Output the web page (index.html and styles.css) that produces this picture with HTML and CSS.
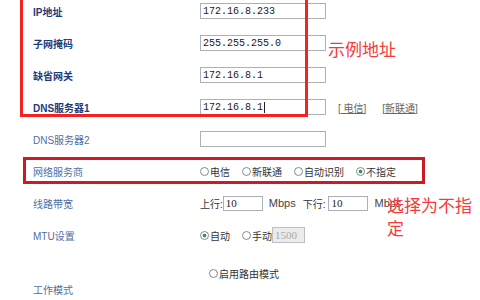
FILE: index.html
```html
<!DOCTYPE html>
<html lang="zh-CN">
<head>
  <meta charset="UTF-8">
  <title>WAN设置</title>
  <link rel="stylesheet" href="styles.css">
</head>
<body>
  <div class="page">
    <div class="form">
      <div class="row">
        <span class="label strong">IP地址</span>
        <input class="field" type="text" value="172.16.8.233">
      </div>
      <div class="row">
        <span class="label strong">子网掩码</span>
        <input class="field" type="text" value="255.255.255.0">
      </div>
      <div class="row">
        <span class="label strong">缺省网关</span>
        <input class="field" type="text" value="172.16.8.1">
      </div>
      <div class="row">
        <span class="label strong">DNS服务器1</span>
        <div class="field fake">172.16.8.1<span class="caret"></span></div>
        <a class="dns-link" href="#">[ 电信]</a>
        <a class="dns-link" href="#">[新联通]</a>
      </div>
      <div class="row">
        <span class="label">DNS服务器2</span>
        <input class="field" type="text" value="">
      </div>
      <div class="row">
        <span class="label">网络服务商</span>
        <label class="choice"><input type="radio" name="isp">电信</label>
        <label class="choice"><input type="radio" name="isp">新联通</label>
        <label class="choice"><input type="radio" name="isp">自动识别</label>
        <label class="choice"><input type="radio" name="isp" checked>不指定</label>
      </div>
      <div class="row">
        <span class="label">线路带宽</span>
        <span class="unit">上行:</span><input class="small" type="text" value="10">
        <span class="mbps">Mbps</span>
        <span class="unit spaced">下行:</span><input class="small" type="text" value="10">
        <span class="mbps">Mbps</span>
      </div>
      <div class="row">
        <span class="label">MTU设置</span>
        <label class="choice"><input type="radio" name="mtu" checked>自动</label>
        <label class="choice tight"><input type="radio" name="mtu">手动</label><input class="mtu" type="text" value="1500" disabled>
      </div>
      <div class="row mode">
        <span class="label">工作模式</span>
        <div class="mode-list">
          <label class="choice"><input type="radio" name="mode">启用路由模式</label>
          <label class="choice"><input type="radio" name="mode">启用桥模式</label>
        </div>
      </div>
    </div>

    <div class="mark mark-lan"></div>
    <div class="mark mark-isp"></div>
    <p class="note note-lan">示例地址</p>
    <p class="note note-isp">选择为不指定</p>
  </div>
</body>
</html>
```

FILE: styles.css
```css
body {
  margin: 0;
  background: #fff;
  font-family: "Liberation Sans", "Noto Sans CJK SC", sans-serif;
  font-size: 10px;
}

.page {
  position: relative;
  width: 480px;
  height: 300px;
  overflow: hidden;
}

.form {
  margin-top: -5px;
}

.row {
  display: flex;
  align-items: center;
  height: 32px;
  padding-left: 33px;
}

.label {
  flex: none;
  width: 167px;
  color: #4f6ea5;
}

.label.strong {
  color: #1f3b7a;
  font-weight: bold;
}

.field {
  box-sizing: border-box;
  width: 126px;
  height: 16px;
  margin: 0;
  padding: 0 2px;
  border: 1px solid #a9b1b9;
  font-family: "Liberation Mono", monospace;
  font-size: 10px;
  color: #222;
}

.fake {
  display: flex;
  align-items: center;
}

.caret {
  width: 1px;
  height: 11px;
  margin-left: 1px;
  background: #222;
}

.dns-link {
  margin-left: 12px;
  color: #666;
  font-size: 10px;
}

.dns-link + .dns-link {
  margin-left: 16px;
}

.choice {
  display: flex;
  align-items: center;
  margin-right: 12px;
  color: #333;
}

.choice.tight {
  margin-right: 0;
}

.choice input {
  appearance: none;
  box-sizing: border-box;
  width: 9px;
  height: 9px;
  margin: 0 1px 0 0;
  border: 1px solid #7f8b97;
  border-radius: 50%;
  background: #fff;
}

.choice input:checked {
  background: radial-gradient(circle, #2f9a44 0 1.6px, #fff 2.2px);
}

.unit {
  color: #333;
}

.unit.spaced {
  margin-right: 3px;
}

.small {
  box-sizing: border-box;
  width: 40px;
  height: 15px;
  margin: 0;
  padding: 0 2px;
  border: 1px solid #a9b1b9;
  font-family: "Liberation Serif", serif;
  font-size: 11px;
  color: #222;
}

.mbps {
  margin: 0 7px 0 6px;
  color: #444;
  font-size: 11px;
}

.mtu {
  box-sizing: border-box;
  width: 33px;
  height: 16px;
  margin: 0;
  padding: 0 2px;
  border: 1px solid #b9bfc5;
  background: #ececec;
  font-family: "Liberation Serif", serif;
  font-size: 11px;
  color: #a8a8a8;
}

.row.mode {
  height: 76px;
}

.mode-list {
  align-self: flex-start;
  padding: 6px 0 0 9px;
}

.mode-list .choice {
  height: 32px;
}

/* red annotations drawn over the screenshot */
.mark {
  position: absolute;
  box-sizing: border-box;
}

.mark-lan {
  left: 20px;
  top: -10px;
  width: 288px;
  height: 127px;
  border: 3px solid #f52222;
}

.mark-isp {
  left: 23px;
  top: 157px;
  width: 402px;
  height: 27px;
  border: 3px solid #cc1a26;
}

.note {
  position: absolute;
  margin: 0;
  color: #f53a3a;
  font-family: "Noto Sans CJK SC", sans-serif;
  font-size: 17px;
  line-height: 23px;
}

.note-lan {
  left: 328px;
  top: 37px;
}

.note-isp {
  left: 387px;
  top: 193px;
  width: 90px;
}
```
